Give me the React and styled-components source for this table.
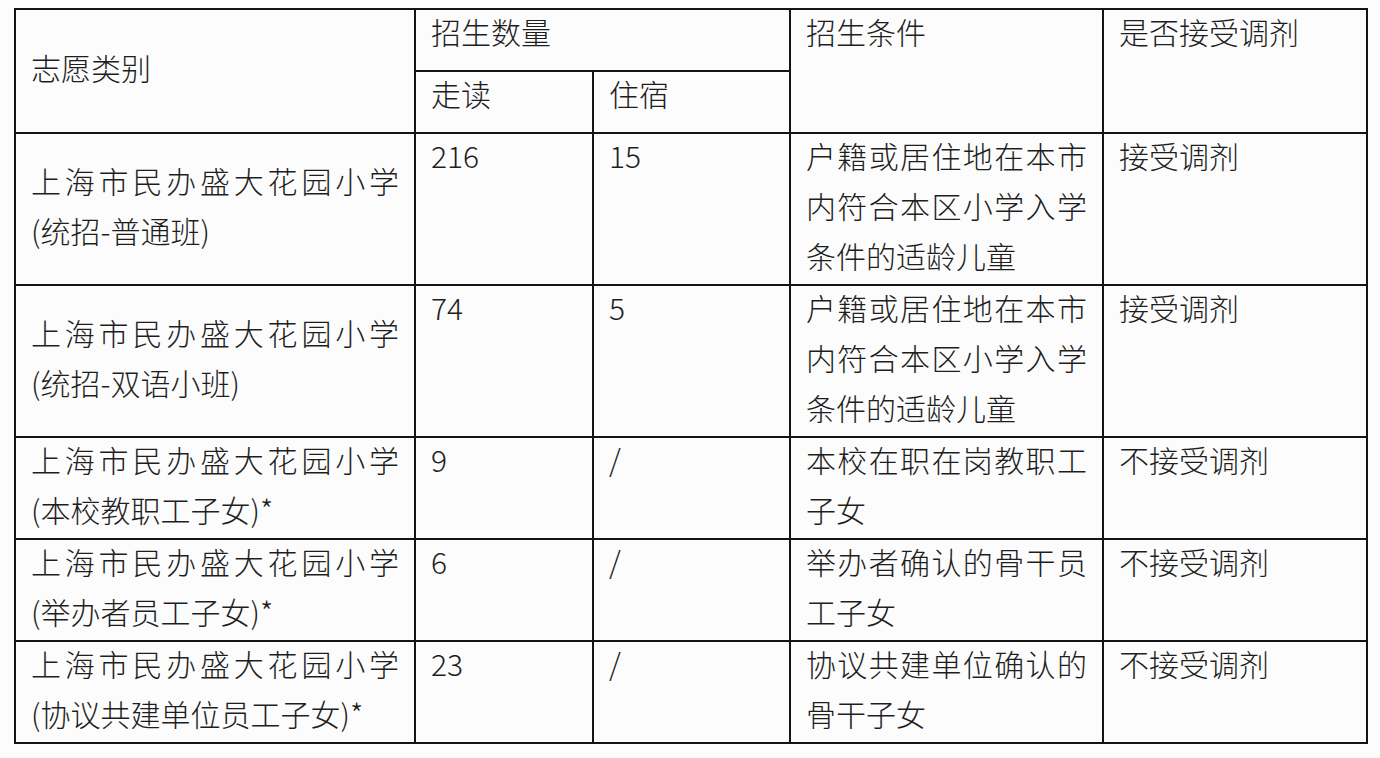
import React from 'react'
import styled, { createGlobalStyle } from 'styled-components'

const GlobalStyle = createGlobalStyle`
    html, body {
        margin: 0;
        padding: 0;
        background-color: #fcfcfc;
    }
    body {
        font-family: "Noto Sans CJK SC", "Noto Sans", sans-serif;
        color: #1e1e1e;
    }
`;

const StyledPage = styled.div`
    padding: 8px 0 0 14px;
`;

const StyledGrid = styled.div`
    display: grid;
    grid-template-columns: 398px 176px 195px 311px 262px;
    grid-template-rows: 60px 60px repeat(5, auto);
    gap: 2px;
    padding: 2px;
    width: max-content;
    background-color: #141414;
`;

const StyledCell = styled.div`
    grid-column: span ${({ $colSpan }) => $colSpan || 1};
    grid-row: span ${({ $rowSpan }) => $rowSpan || 1};
    display: flex;
    flex-direction: column;
    justify-content: ${({ $middle }) => ($middle ? 'center' : 'flex-start')};
    padding: 0 15px;
    background-color: #fcfcfc;
    font-size: 30px;
    font-weight: 300;
    line-height: 50px;
    text-align: justify;
    word-break: break-all;
`;

// Noto CJK sits a little low in its line box, lift the text to match
const StyledText = styled.div`
    margin: -4px 0 4px;
`;

const rows = [
    {
        name: '上海市民办盛大花园小学(统招-普通班)',
        day: '216',
        board: '15',
        rule: '户籍或居住地在本市内符合本区小学入学条件的适龄儿童',
        adjust: '接受调剂'
    },
    {
        name: '上海市民办盛大花园小学(统招-双语小班)',
        day: '74',
        board: '5',
        rule: '户籍或居住地在本市内符合本区小学入学条件的适龄儿童',
        adjust: '接受调剂'
    },
    {
        name: '上海市民办盛大花园小学(本校教职工子女)*',
        day: '9',
        board: '/',
        rule: '本校在职在岗教职工子女',
        adjust: '不接受调剂'
    },
    {
        name: '上海市民办盛大花园小学(举办者员工子女)*',
        day: '6',
        board: '/',
        rule: '举办者确认的骨干员工子女',
        adjust: '不接受调剂'
    },
    {
        name: '上海市民办盛大花园小学(协议共建单位员工子女)*',
        day: '23',
        board: '/',
        rule: '协议共建单位确认的骨干子女',
        adjust: '不接受调剂'
    }
];

const Cell = ({ children, ...props }) => (
    <StyledCell {...props}>
        <StyledText>{children}</StyledText>
    </StyledCell>
);

const App = () => {
    return (
        <>
            <GlobalStyle />
            <StyledPage>
                <StyledGrid>
                    <Cell $rowSpan={2} $middle>志愿类别</Cell>
                    <Cell $colSpan={2}>招生数量</Cell>
                    <Cell $rowSpan={2}>招生条件</Cell>
                    <Cell $rowSpan={2}>是否接受调剂</Cell>
                    <Cell>走读</Cell>
                    <Cell>住宿</Cell>
                    {rows.map((row, i) => (
                        <React.Fragment key={i}>
                            <Cell $middle>{row.name}</Cell>
                            <Cell>{row.day}</Cell>
                            <Cell>{row.board}</Cell>
                            <Cell>{row.rule}</Cell>
                            <Cell>{row.adjust}</Cell>
                        </React.Fragment>
                    ))}
                </StyledGrid>
            </StyledPage>
        </>
    )
}

export default App;
